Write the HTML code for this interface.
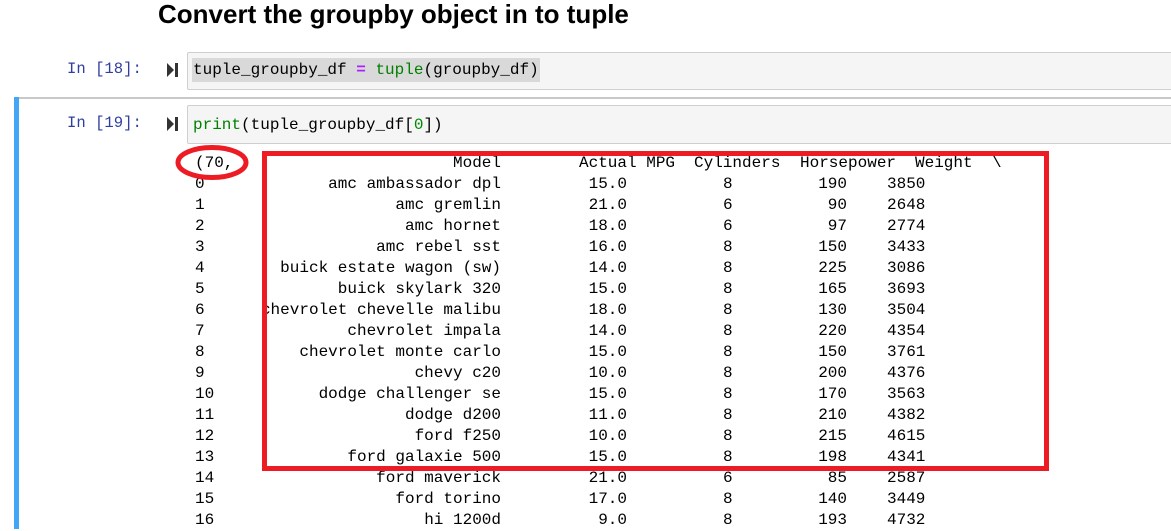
<!DOCTYPE html>
<html><head><meta charset="utf-8"><style>
body{margin:0;width:1171px;height:529px;overflow:hidden;background:#fff;position:relative;font-family:"Liberation Mono",monospace;font-size:16px}
.a{position:absolute;white-space:pre}
h1{position:absolute;left:158px;top:-1px;margin:0;font:bold 26px "Liberation Sans",sans-serif;color:#000}
.prompt{color:#303F9F;font-size:15.6px}
.box{position:absolute;left:187px;right:-2px;background:#f5f5f5;border:1px solid #cfcfcf;border-radius:2px}
.run{position:absolute;width:12px;height:14px}
.r{position:absolute;height:21px;line-height:21px;left:0;width:1171px}
.r span{position:absolute;white-space:pre}
.r span:nth-child(5){left:0;width:847px;text-align:right}
.r span:nth-child(6){left:887px}
.r.h span{width:auto!important}
</style></head><body>
<h1>Convert the groupby object in to tuple</h1>

<div class="a prompt" style="left:67px;top:60px">In [18]:</div>
<svg class="run" style="left:167px;top:63px" viewBox="0 0 12 14"><path d="M0 0L7 7L0 14Z" fill="#333"/><rect x="8" y="0" width="3" height="14" fill="#333"/></svg>
<div class="box" style="top:52px;height:36px"></div>
<div class="a" style="left:192px;top:58px;height:24px;line-height:24px;background:#d9d9d9;padding:0 1px">tuple_groupby_df <span style="color:#aa22ff;font-weight:bold">=</span> <span style="color:#008000">tuple</span>(groupby_df)</div>

<div style="position:absolute;left:14px;right:0;top:97px;height:2px;background:#c8c8c8"></div>
<div style="position:absolute;left:14px;width:5px;top:97px;bottom:0;background:#42a5f5"></div>

<div class="a prompt" style="left:67px;top:114px">In [19]:</div>
<svg class="run" style="left:167px;top:117px" viewBox="0 0 12 14"><path d="M0 0L7 7L0 14Z" fill="#333"/><rect x="8" y="0" width="3" height="14" fill="#333"/></svg>
<div class="box" style="top:105px;height:37px"></div>
<div class="a" style="left:193px;top:113px;line-height:24px"><span style="color:#008000">print</span>(tuple_groupby_df[<span style="color:#008800">0</span>])</div>

<div style="position:absolute;left:0;top:153px">
<div class="r h" style="top:0"><span style="left:195px">(70,</span><span style="left:453px">Model</span><span style="left:579px">Actual MPG</span><span style="left:694px">Cylinders</span><span style="left:800px">Horsepower</span><span style="left:915px">Weight</span><span style="left:992px">\</span></div>
<div class="r" style="top:21px"><span style="left:195px">0</span><span style="left:0;width:501px;text-align:right">amc ambassador dpl</span><span style="left:0;width:627px;text-align:right">15.0</span><span style="left:723px">8</span><span>190</span><span>3850</span></div>
<div class="r" style="top:42px"><span style="left:195px">1</span><span style="left:0;width:501px;text-align:right">amc gremlin</span><span style="left:0;width:627px;text-align:right">21.0</span><span style="left:723px">6</span><span>90</span><span>2648</span></div>
<div class="r" style="top:63px"><span style="left:195px">2</span><span style="left:0;width:501px;text-align:right">amc hornet</span><span style="left:0;width:627px;text-align:right">18.0</span><span style="left:723px">6</span><span>97</span><span>2774</span></div>
<div class="r" style="top:84px"><span style="left:195px">3</span><span style="left:0;width:501px;text-align:right">amc rebel sst</span><span style="left:0;width:627px;text-align:right">16.0</span><span style="left:723px">8</span><span>150</span><span>3433</span></div>
<div class="r" style="top:105px"><span style="left:195px">4</span><span style="left:0;width:501px;text-align:right">buick estate wagon (sw)</span><span style="left:0;width:627px;text-align:right">14.0</span><span style="left:723px">8</span><span>225</span><span>3086</span></div>
<div class="r" style="top:126px"><span style="left:195px">5</span><span style="left:0;width:501px;text-align:right">buick skylark 320</span><span style="left:0;width:627px;text-align:right">15.0</span><span style="left:723px">8</span><span>165</span><span>3693</span></div>
<div class="r" style="top:147px"><span style="left:195px">6</span><span style="left:0;width:501px;text-align:right">chevrolet chevelle malibu</span><span style="left:0;width:627px;text-align:right">18.0</span><span style="left:723px">8</span><span>130</span><span>3504</span></div>
<div class="r" style="top:168px"><span style="left:195px">7</span><span style="left:0;width:501px;text-align:right">chevrolet impala</span><span style="left:0;width:627px;text-align:right">14.0</span><span style="left:723px">8</span><span>220</span><span>4354</span></div>
<div class="r" style="top:189px"><span style="left:195px">8</span><span style="left:0;width:501px;text-align:right">chevrolet monte carlo</span><span style="left:0;width:627px;text-align:right">15.0</span><span style="left:723px">8</span><span>150</span><span>3761</span></div>
<div class="r" style="top:210px"><span style="left:195px">9</span><span style="left:0;width:501px;text-align:right">chevy c20</span><span style="left:0;width:627px;text-align:right">10.0</span><span style="left:723px">8</span><span>200</span><span>4376</span></div>
<div class="r" style="top:231px"><span style="left:195px">10</span><span style="left:0;width:501px;text-align:right">dodge challenger se</span><span style="left:0;width:627px;text-align:right">15.0</span><span style="left:723px">8</span><span>170</span><span>3563</span></div>
<div class="r" style="top:252px"><span style="left:195px">11</span><span style="left:0;width:501px;text-align:right">dodge d200</span><span style="left:0;width:627px;text-align:right">11.0</span><span style="left:723px">8</span><span>210</span><span>4382</span></div>
<div class="r" style="top:273px"><span style="left:195px">12</span><span style="left:0;width:501px;text-align:right">ford f250</span><span style="left:0;width:627px;text-align:right">10.0</span><span style="left:723px">8</span><span>215</span><span>4615</span></div>
<div class="r" style="top:294px"><span style="left:195px">13</span><span style="left:0;width:501px;text-align:right">ford galaxie 500</span><span style="left:0;width:627px;text-align:right">15.0</span><span style="left:723px">8</span><span>198</span><span>4341</span></div>
<div class="r" style="top:315px"><span style="left:195px">14</span><span style="left:0;width:501px;text-align:right">ford maverick</span><span style="left:0;width:627px;text-align:right">21.0</span><span style="left:723px">6</span><span>85</span><span>2587</span></div>
<div class="r" style="top:336px"><span style="left:195px">15</span><span style="left:0;width:501px;text-align:right">ford torino</span><span style="left:0;width:627px;text-align:right">17.0</span><span style="left:723px">8</span><span>140</span><span>3449</span></div>
<div class="r" style="top:357px"><span style="left:195px">16</span><span style="left:0;width:501px;text-align:right">hi 1200d</span><span style="left:0;width:627px;text-align:right">9.0</span><span style="left:723px">8</span><span>193</span><span>4732</span></div>
</div>

<div style="position:absolute;left:262px;top:151px;width:777px;height:310px;border:5px solid #ed1c24"></div>
<svg style="position:absolute;left:0;top:0" width="1171" height="529"><ellipse cx="212" cy="162.5" rx="34" ry="15" fill="none" stroke="#ed1c24" stroke-width="5"/></svg>
</body></html>
